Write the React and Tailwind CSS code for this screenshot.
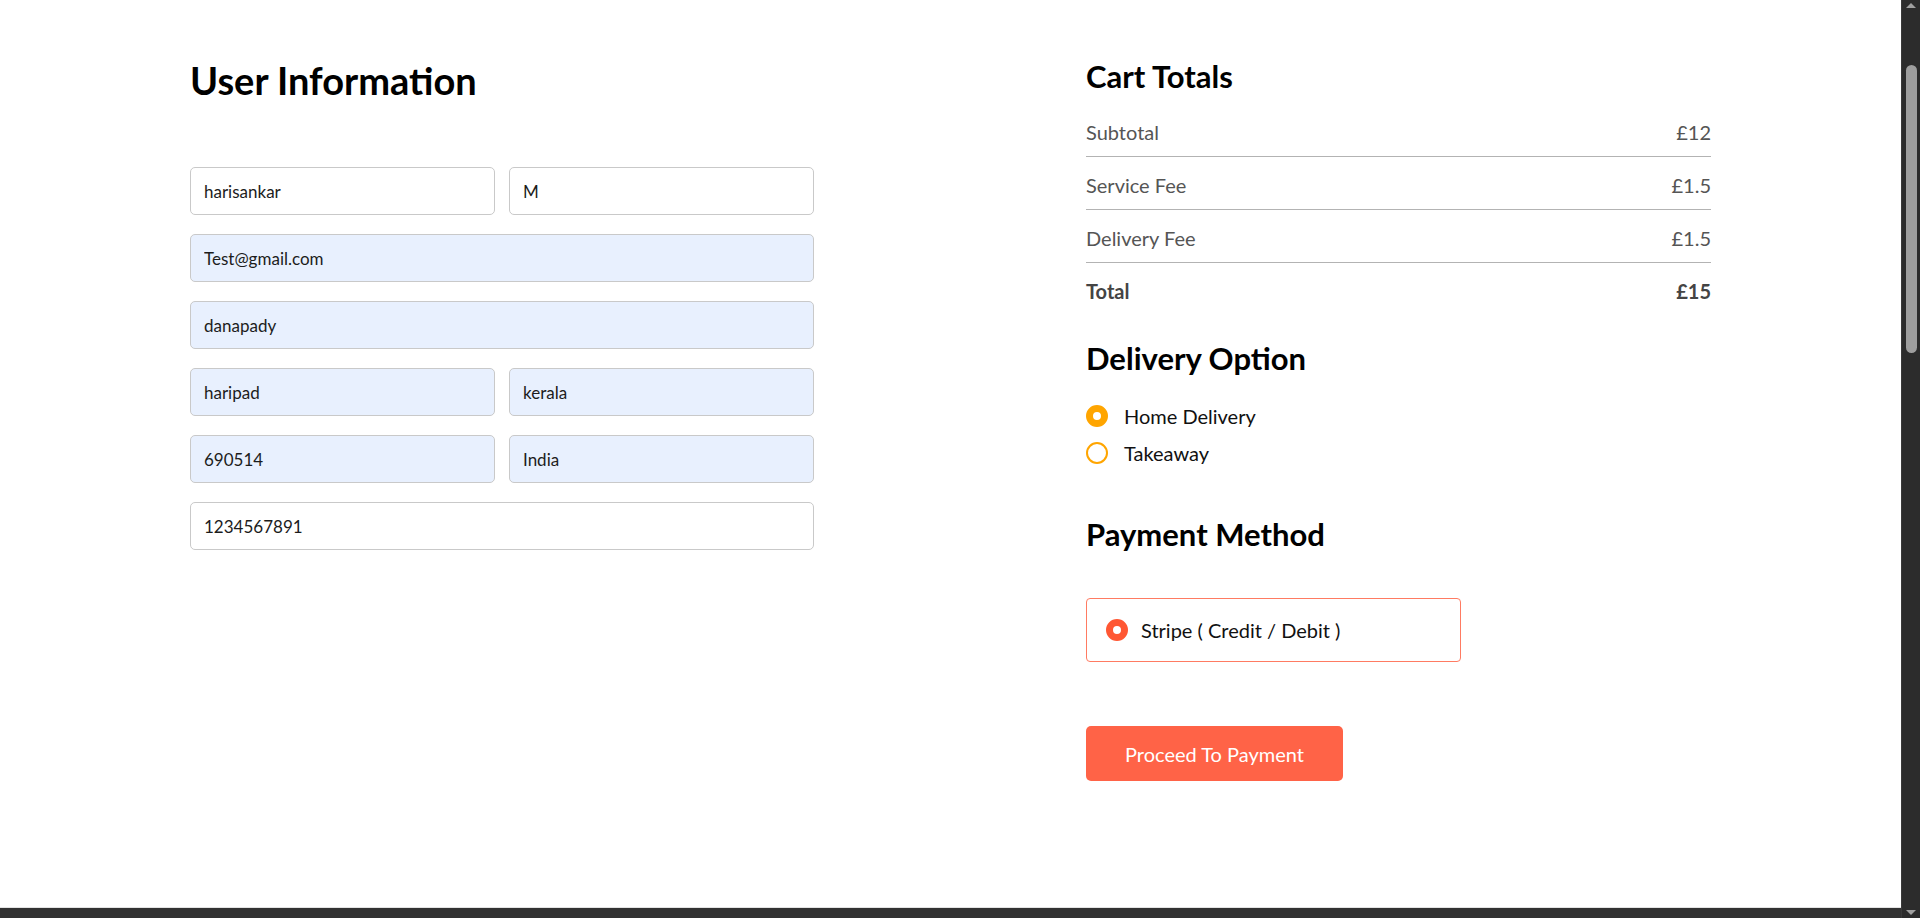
const font = { fontFamily: "Lato, 'Noto Sans', sans-serif" };

function Field({ value, filled }) {
    return (
        <input
            readOnly
            value={value}
            className={`h-[48px] w-full min-w-0 rounded-[5px] border border-[#c9c9c9] px-[13px] text-[17px] text-[#1c1c1c] outline-none ${
                filled ? 'bg-[#e8f0fe]' : 'bg-white'
            }`}
        />
    );
}

function CartRow({ label, value, bold }) {
    return (
        <div className={`flex h-[24px] items-center justify-between text-[20px] leading-[24px] ${bold ? 'font-bold text-[#444]' : 'text-[#555]'}`}>
            <p>{label}</p>
            <p>{value}</p>
        </div>
    );
}

function Radio({ checked, label }) {
    return (
        <label className="flex h-[28px] items-center gap-[16px] text-[20px] text-[#111]">
            <span
                className={`h-[22px] w-[22px] shrink-0 rounded-full bg-white ${
                    checked ? 'border-[7px] border-[#ffa500]' : 'border-2 border-[#ffa500]'
                }`}
            />
            {label}
        </label>
    );
}

export default function App() {
    return (
        <div className="flex h-[918px] w-full overflow-hidden bg-white" style={font}>
            <div className="flex flex-1 flex-col">
                <div className="flex flex-1 items-start pl-[190px] pt-[59px]">
                    {/* User Information */}
                    <div className="w-[624px]">
                        <h1 className="text-[38px] font-bold leading-[42px] text-black">User Information</h1>
                        <div className="mt-[66px] flex flex-col gap-[19px]">
                            <div className="flex gap-[14px]">
                                <Field value="harisankar" />
                                <Field value="M" />
                            </div>
                            <Field value="Test@gmail.com" filled />
                            <Field value="danapady" filled />
                            <div className="flex gap-[14px]">
                                <Field value="haripad" filled />
                                <Field value="kerala" filled />
                            </div>
                            <div className="flex gap-[14px]">
                                <Field value="690514" filled />
                                <Field value="India" filled />
                            </div>
                            <Field value="1234567891" />
                        </div>
                    </div>

                    {/* Cart Totals */}
                    <div className="ml-[272px] w-[625px]">
                        <h2 className="text-[31px] font-bold leading-[34px] text-black">Cart Totals</h2>
                        <div className="mt-[27px]">
                            <CartRow label="Subtotal" value="£12" />
                            <hr className="mb-[16px] mt-[12px] border-[#b3b3b3]" />
                            <CartRow label="Service Fee" value="£1.5" />
                            <hr className="mb-[16px] mt-[12px] border-[#b3b3b3]" />
                            <CartRow label="Delivery Fee" value="£1.5" />
                            <hr className="mb-[16px] mt-[12px] border-[#b3b3b3]" />
                            <CartRow label="Total" value="£15" bold />
                        </div>

                        <h2 className="mt-[38px] text-[31px] font-bold leading-[34px] text-black">Delivery Option</h2>
                        <div className="mt-[27px] flex flex-col gap-[9px]">
                            <Radio checked label="Home Delivery" />
                            <Radio label="Takeaway" />
                        </div>

                        <h2 className="mt-[50px] text-[31px] font-bold leading-[34px] text-black">Payment Method</h2>
                        <div className="mt-[47px] flex h-[64px] w-[375px] items-center gap-[13px] rounded-[4px] border border-[#ff7b62] pl-[19px]">
                            <span className="h-[22px] w-[22px] shrink-0 rounded-full border-[7px] border-[#ff5733] bg-white" />
                            <span className="text-[20px] text-[#111]">Stripe ( Credit / Debit )</span>
                        </div>

                        <button className="mt-[64px] h-[55px] w-[257px] rounded-[5px] bg-[#ff6347] text-[20px] text-white">
                            Proceed To Payment
                        </button>
                    </div>
                </div>
                <div className="h-[11px] border-t border-[#e3e3e3] bg-[#323232]" />
            </div>

            {/* scrollbar */}
            <div className="flex w-[19px] flex-col items-center border-l border-[#3a3a3a] bg-[#2c2c2c]">
                <div className="mt-[3px] h-0 w-0 border-x-[5px] border-b-[5px] border-x-transparent border-b-[#a0a0a0]" />
                <div className="mt-[57px] h-[288px] w-[11px] rounded-full bg-[#9e9e9e]" />
                <div className="flex-1" />
                <div className="mb-[3px] h-0 w-0 border-x-[5px] border-t-[5px] border-x-transparent border-t-[#a0a0a0]" />
            </div>
        </div>
    );
}
